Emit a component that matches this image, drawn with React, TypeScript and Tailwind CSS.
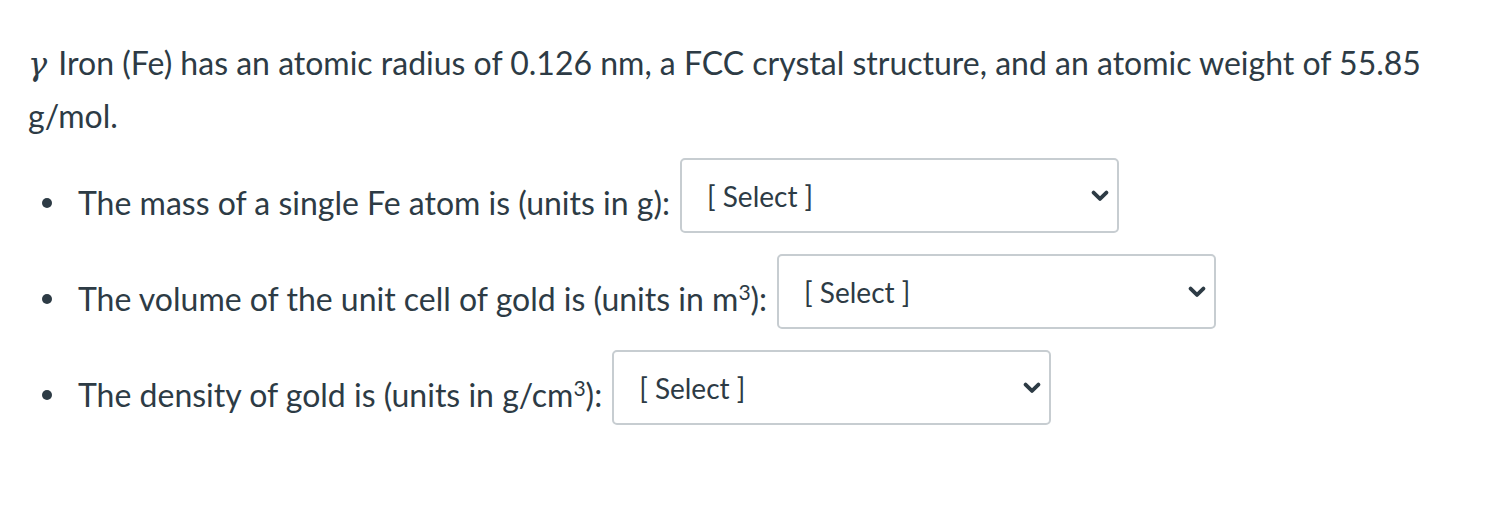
import React from "react";

function Chevron() {
  return (
    <svg width="18" height="12" viewBox="0 0 18 12" className="shrink-0">
      <path d="M2.6 2.6 L9 8.9 L15.4 2.6" fill="none" stroke="#2d3b45" strokeWidth="3.8" strokeLinecap="round" strokeLinejoin="round" />
    </svg>
  );
}

function SelectBox() {
  return (
    <div className="ml-[10px] flex h-[75px] w-[439px] shrink-0 items-center justify-between rounded-[5px] border-2 border-[#c7cdd1] bg-white pl-[25px] pr-[8px]">
      <span className="text-[28px] text-[#2d3b45]">[ Select ]</span>
      <Chevron />
    </div>
  );
}

function Row({ children }: { children: React.ReactNode }) {
  return (
    <li className="flex items-center">
      <span className="mr-[26px] mt-[14px] inline-block h-[10px] w-[10px] shrink-0 rounded-full bg-[#2d3b45]" />
      <span className="mt-[14px] whitespace-nowrap">{children}</span>
      <SelectBox />
    </li>
  );
}

export default function App() {
  return (
    <div
      className="min-h-[524px] bg-white pl-[28px] pr-[28px] pt-[37px] text-[32px] text-[#2d3b45]"
      style={{ fontFamily: "Lato, 'Noto Sans', sans-serif" }}
    >
      <p className="leading-[51px]">
        <span className="inline-block pr-[3px] italic" style={{ fontFamily: "'DejaVu Serif', serif" }}>γ</span> Iron (Fe) has an atomic radius of 0.126 nm, a FCC crystal structure, and an atomic weight of 55.85 g/mol.
      </p>
      <ul className="mt-[17px] flex flex-col gap-[21px] pl-[14px]">
        <Row>The mass of a single Fe atom is (units in g):</Row>
        <Row>
          The volume of the unit cell of gold is (units in m<sup className="text-[21px]">3</sup>):
        </Row>
        <Row>
          The density of gold is (units in g/cm<sup className="text-[21px]">3</sup>):
        </Row>
      </ul>
    </div>
  );
}
